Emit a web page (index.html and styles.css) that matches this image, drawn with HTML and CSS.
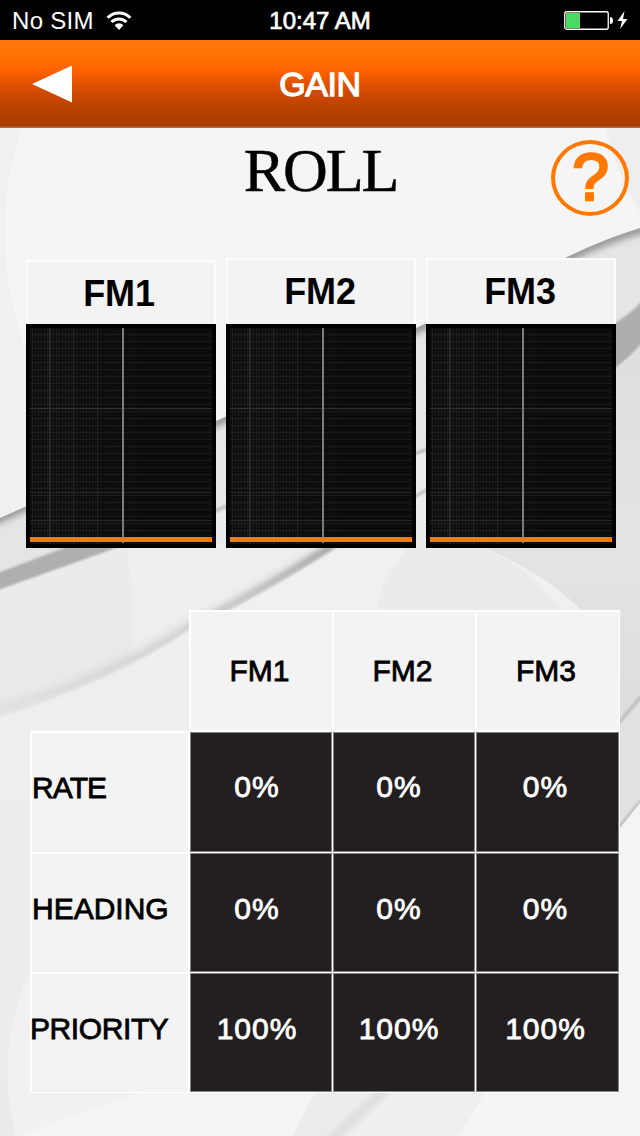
FILE: index.html
```html
<!DOCTYPE html>
<html lang="en">
<head>
    <meta charset="UTF-8">
    <meta name="viewport" content="width=device-width, initial-scale=1.0">
    <title>Gain</title>
    <link rel="stylesheet" href="styles.css">
</head>
<body>
    <svg class="backdrop" viewBox="0 0 640 1136" aria-hidden="true">
        <defs>
            <linearGradient id="sweep" x1="0" y1="0" x2="0.3" y2="1">
                <stop offset="0" stop-color="#dedede"/>
                <stop offset="1" stop-color="#ececec"/>
            </linearGradient>
            <linearGradient id="edge" gradientUnits="userSpaceOnUse" x1="0" y1="0" x2="340" y2="0">
                <stop offset="0" stop-color="#aaa" stop-opacity="0.1"/>
                <stop offset="0.5" stop-color="#aaa" stop-opacity="0.4"/>
                <stop offset="1" stop-color="#888"/>
            </linearGradient>
            <linearGradient id="low" gradientUnits="userSpaceOnUse" x1="0" y1="545" x2="0" y2="1136">
                <stop offset="0" stop-color="#f1f1f1"/>
                <stop offset="0.25" stop-color="#eee"/>
                <stop offset="1" stop-color="#ebebeb"/>
            </linearGradient>
            <linearGradient id="side" gradientUnits="userSpaceOnUse" x1="0" y1="371" x2="0" y2="727">
                <stop offset="0" stop-color="#dedede"/>
                <stop offset="0.5" stop-color="#e4e4e4"/>
                <stop offset="1" stop-color="#dcdcdc"/>
            </linearGradient>
            <filter id="soft"><feGaussianBlur stdDeviation="1"/></filter>
            <filter id="shade"><feGaussianBlur stdDeviation="3"/></filter>
            <filter id="softer"><feGaussianBlur stdDeviation="7"/></filter>
        </defs>
        <rect width="640" height="1136" fill="url(#sweep)"/>

        <!-- upper sheet and the shadow it casts -->
        <path d="M650 226Q604 239 567 258L416 329L216 422L-10 522" fill="none" stroke="#999" stroke-width="10" filter="url(#shade)"/>
        <path d="M0 128H640V228Q604 239 567 257L416 328L216 421L0 518z" fill="#f5f5f5"/>
        <path d="M0 128H22C0 190-4 270 26 350V505L0 517z" fill="#f0f0f0"/>
        <path d="M606 128H640V212Q617 176 606 128z" fill="#eee"/>

        <!-- middle sheet -->
        <path d="M645 298Q630 315 610 326V372Q630 358 645 340z" fill="#adadad" filter="url(#soft)"/>
        <path d="M0 590L125 545L226 510L416 455L616 371L640 348V760H0z" fill="#ebebeb"/>
        <path d="M-5 574L85 540H138L-5 591z" fill="#afafaf" filter="url(#soft)"/>
        <path d="M210 513L232 504M410 455L432 448M410 499L432 487" stroke="#bbb" stroke-width="3" filter="url(#soft)"/>
        <path d="M125 545H345L188 630L128 660Q140 610 125 545z" fill="#efefef"/>

        <!-- lower sheet -->
        <path d="M-10 716Q110 680 188 628Q260 598 345 540" fill="none" stroke="#ccc" stroke-width="18" opacity="0.25" filter="url(#softer)"/>
        <path d="M-10 712Q110 678 188 627Q260 592 345 538" fill="none" stroke="url(#edge)" stroke-width="6" filter="url(#shade)"/>
        <path d="M-10 720Q110 684 188 631Q260 597 337 548H650V1136H-10z" fill="url(#low)" filter="url(#soft)"/>
        <path d="M410 545Q380 580 376 611H562Q530 567 478 545z" fill="#ebebeb"/>
        <path d="M478 545H616V371L640 348V700L616 727V660Q585 590 478 545z" fill="url(#side)"/>
        <path d="M640 698V802L616 832V727z" fill="#e1e1e1"/>
        <path d="M645 692L612 731M645 796L612 836" stroke="#bbb" stroke-width="3" filter="url(#soft)"/>
        <path d="M640 803L616 833V1136H640z" fill="#f4f4f4"/>
        <path d="M16 1136L142 1092H640V1136z" fill="#f5f5f5"/>
        <path d="M30 970Q-6 1050 16 1136L142 1092H30z" fill="#f1f1f1"/>
        <path d="M315 1092H485L458 1136H293z" fill="#ececec"/>
        <path d="M400 1076L330 1140" stroke="#dcdcdc" stroke-width="8" filter="url(#shade)"/>
        <path d="M394 1092H485L458 1136H350z" fill="#efefef"/>
    </svg>

    <div class="status-bar">
        <div class="carrier">
            <span>No SIM</span>
            <svg width="26" height="20" viewBox="0 0 26 20">
                <path d="M1.6 6.8A16 16 0 0 1 24.4 6.8M5.5 11A10.6 10.6 0 0 1 20.5 11" fill="none" stroke="#fff" stroke-width="3"/>
                <path d="M8.6 14.2A6.2 6.2 0 0 1 17.4 14.2L13 19z" fill="#fff"/>
            </svg>
        </div>
        <div class="clock">10:47 AM</div>
        <div class="power">
            <svg width="65" height="20" viewBox="0 0 65 20">
                <rect x="0.75" y="1.75" width="43.5" height="17.5" rx="2" fill="none" stroke="#fff" stroke-width="1.3"/>
                <rect x="2" y="3" width="14" height="15" fill="#4cd964"/>
                <path d="M46 7Q49 7 49 10.5Q49 14 46 14z" fill="#fff"/>
                <path d="M60.5 1L53.5 11H58L56 19L63.5 9H59z" fill="#fff"/>
            </svg>
        </div>
    </div>

    <div class="nav-bar">
        <svg class="back" width="40" height="38" viewBox="0 0 40 38">
            <path d="M0 19L40 0.5V37.5z" fill="#fff"/>
        </svg>
        <h1>GAIN</h1>
    </div>

    <div class="heading">
        <h2>ROLL</h2>
        <div class="help">?</div>
    </div>

    <div class="charts">
        <div class="chart">
            <div class="chart-title first">FM1</div>
            <div class="plot"><div class="axis"></div><div class="level"></div></div>
        </div>
        <div class="chart">
            <div class="chart-title">FM2</div>
            <div class="plot"><div class="axis"></div><div class="level"></div></div>
        </div>
        <div class="chart">
            <div class="chart-title">FM3</div>
            <div class="plot"><div class="axis"></div><div class="level"></div></div>
        </div>
    </div>

    <div class="gains">
        <div></div>
        <div class="cell head">FM1</div>
        <div class="cell head">FM2</div>
        <div class="cell head last">FM3</div>

        <div class="cell label rate">RATE</div>
        <div class="cell value high">0%</div>
        <div class="cell value high mid">0%</div>
        <div class="cell value high last">0%</div>

        <div class="cell label">HEADING</div>
        <div class="cell value">0%</div>
        <div class="cell value mid">0%</div>
        <div class="cell value last">0%</div>

        <div class="cell label priority">PRIORITY</div>
        <div class="cell value">100%</div>
        <div class="cell value mid">100%</div>
        <div class="cell value last">100%</div>
    </div>
</body>
</html>
```
FILE: styles.css
```css
* {
    box-sizing: border-box;
}
body {
    position: relative;
    width: 640px;
    height: 1136px;
    margin: 0;
    overflow: hidden;
    font-family: "Liberation Sans", Arial, sans-serif;
    color: #000;
}
svg {
    display: block;
}
.backdrop {
    position: absolute;
    top: 0;
    left: 0;
    width: 640px;
    height: 1136px;
    z-index: -1;
}

/* top bars */
.status-bar {
    display: grid;
    grid-template-columns: 1fr auto 1fr;
    align-items: center;
    height: 40px;
    padding: 0 11px;
    background: #000;
    color: #fff;
    font-size: 24px;
    line-height: 40px;
}
.carrier {
    display: flex;
    align-items: center;
    gap: 12px;
    padding-left: 1px;
    letter-spacing: 0.3px;
}
.carrier span {
    padding-top: 1px;
}
.clock {
    line-height: 41px;
    -webkit-text-stroke: 0.7px #fff;
}
.power {
    justify-self: end;
    padding-bottom: 1px;
}
.nav-bar {
    display: grid;
    grid-template-columns: 1fr auto 1fr;
    align-items: center;
    height: 88px;
    padding: 0 32px;
    background: linear-gradient(#ff7a10 0, #ff7200 18px, #ff6000 32px, #e25100 43px, #c84600 58px, #a93c00 84px, #a83c00 86px, #b96a42 87px, #b96a42 88px);
}
h1 {
    margin: 0;
    color: #fff;
    font-size: 34px;
    font-weight: normal;
    -webkit-text-stroke: 1.3px #fff;
    letter-spacing: -0.4px;
}

/* page heading */
.heading {
    display: grid;
    grid-template-columns: 1fr auto 1fr;
    height: 130px;
    padding: 12px 11px 0 12px;
}
h2 {
    grid-column: 2;
    margin: -3px 0 0;
    font-family: "Liberation Serif", "Times New Roman", serif;
    font-size: 62px;
    font-weight: normal;
    line-height: 67px;
    letter-spacing: -2.1px;
    -webkit-text-stroke: 0.5px #000;
}
.help {
    justify-self: end;
    width: 78px;
    height: 76px;
    padding-left: 1px;
    border: 4.5px solid #ff7800;
    border-radius: 50%;
    color: #ff7800;
    font-size: 66px;
    font-weight: normal;
    line-height: 66px;
    text-align: center;
    -webkit-text-stroke: 2.6px #ff7800;
}

/* charts */
.charts {
    display: flex;
    align-items: flex-end;
    gap: 10px;
    height: 290px;
    padding-left: 26px;
}
.chart {
    width: 190px;
}
.chart-title {
    height: 66px;
    padding-right: 2px;
    border: 2px solid #fcfcfc;
    border-bottom: none;
    background: #f3f3f3;
    font-size: 36px;
    font-weight: bold;
    line-height: 63px;
    letter-spacing: -0.2px;
    text-align: center;
}
.chart-title.first {
    height: 64px;
    padding-right: 4px;
}
.plot {
    position: relative;
    height: 224px;
    border: 4px solid #000;
    background:
        linear-gradient(#303030, #303030) 0 80px / 100% 1px no-repeat,
        linear-gradient(#252525, #252525) 0 164px / 100% 1px no-repeat,
        linear-gradient(#252525, #252525) 0 192px / 100% 1px no-repeat,
        linear-gradient(#333, #333) 19px 0 / 1px 100% no-repeat,
        linear-gradient(#242424, #242424) 43px 0 / 1px 100% no-repeat,
        linear-gradient(#242424, #242424) 67px 0 / 1px 100% no-repeat,
        repeating-linear-gradient(transparent 0 6px, rgba(255, 255, 255, 0.06) 6px 7px),
        repeating-linear-gradient(transparent 0 1px, rgba(255, 255, 255, 0.02) 1px 2px),
        linear-gradient(90deg, transparent 10%, #0a0a0a 60%),
        repeating-linear-gradient(90deg, #0b0b0b 0 2px, #191919 2px 3px);
}
.axis {
    position: absolute;
    left: 92px;
    top: 0;
    width: 2px;
    height: 215px;
    background: #7c7c7c;
}
.level {
    position: absolute;
    left: 0;
    bottom: 2px;
    width: 182px;
    height: 5px;
    background: #ff7800;
}

/* gain table */
.gains {
    display: grid;
    grid-template-columns: 158px 142px 142px 143px;
    grid-template-rows: 120px 120px 119px 119px;
    gap: 1px;
    margin: 63px 0 0 31px;
    font-size: 30px;
    -webkit-text-stroke: 0.8px;
}
.cell {
    display: flex;
    align-items: center;
    justify-content: center;
    box-shadow: 0 0 0 1px #fff;
}
.head {
    padding: 0 4px 1px 0;
    border: 1px solid #fff;
    border-right-width: 0;
    background: #f3f3f3;
}
.label {
    justify-content: flex-start;
    padding-bottom: 9px;
    border: 1px solid #fff;
    border-bottom-width: 0;
    background: #f3f3f3;
}
.rate {
    letter-spacing: -0.9px;
}
.priority {
    text-indent: -2px;
    letter-spacing: -0.4px;
}
.value {
    padding: 0 8px 8px 0;
    border: 1px solid #858384;
    background: #231f20;
    color: #fff;
    letter-spacing: 1px;
}
.value.high {
    padding-bottom: 10px;
}
.value.mid {
    padding-right: 10px;
}
.value.last {
    padding-right: 4px;
}
```
